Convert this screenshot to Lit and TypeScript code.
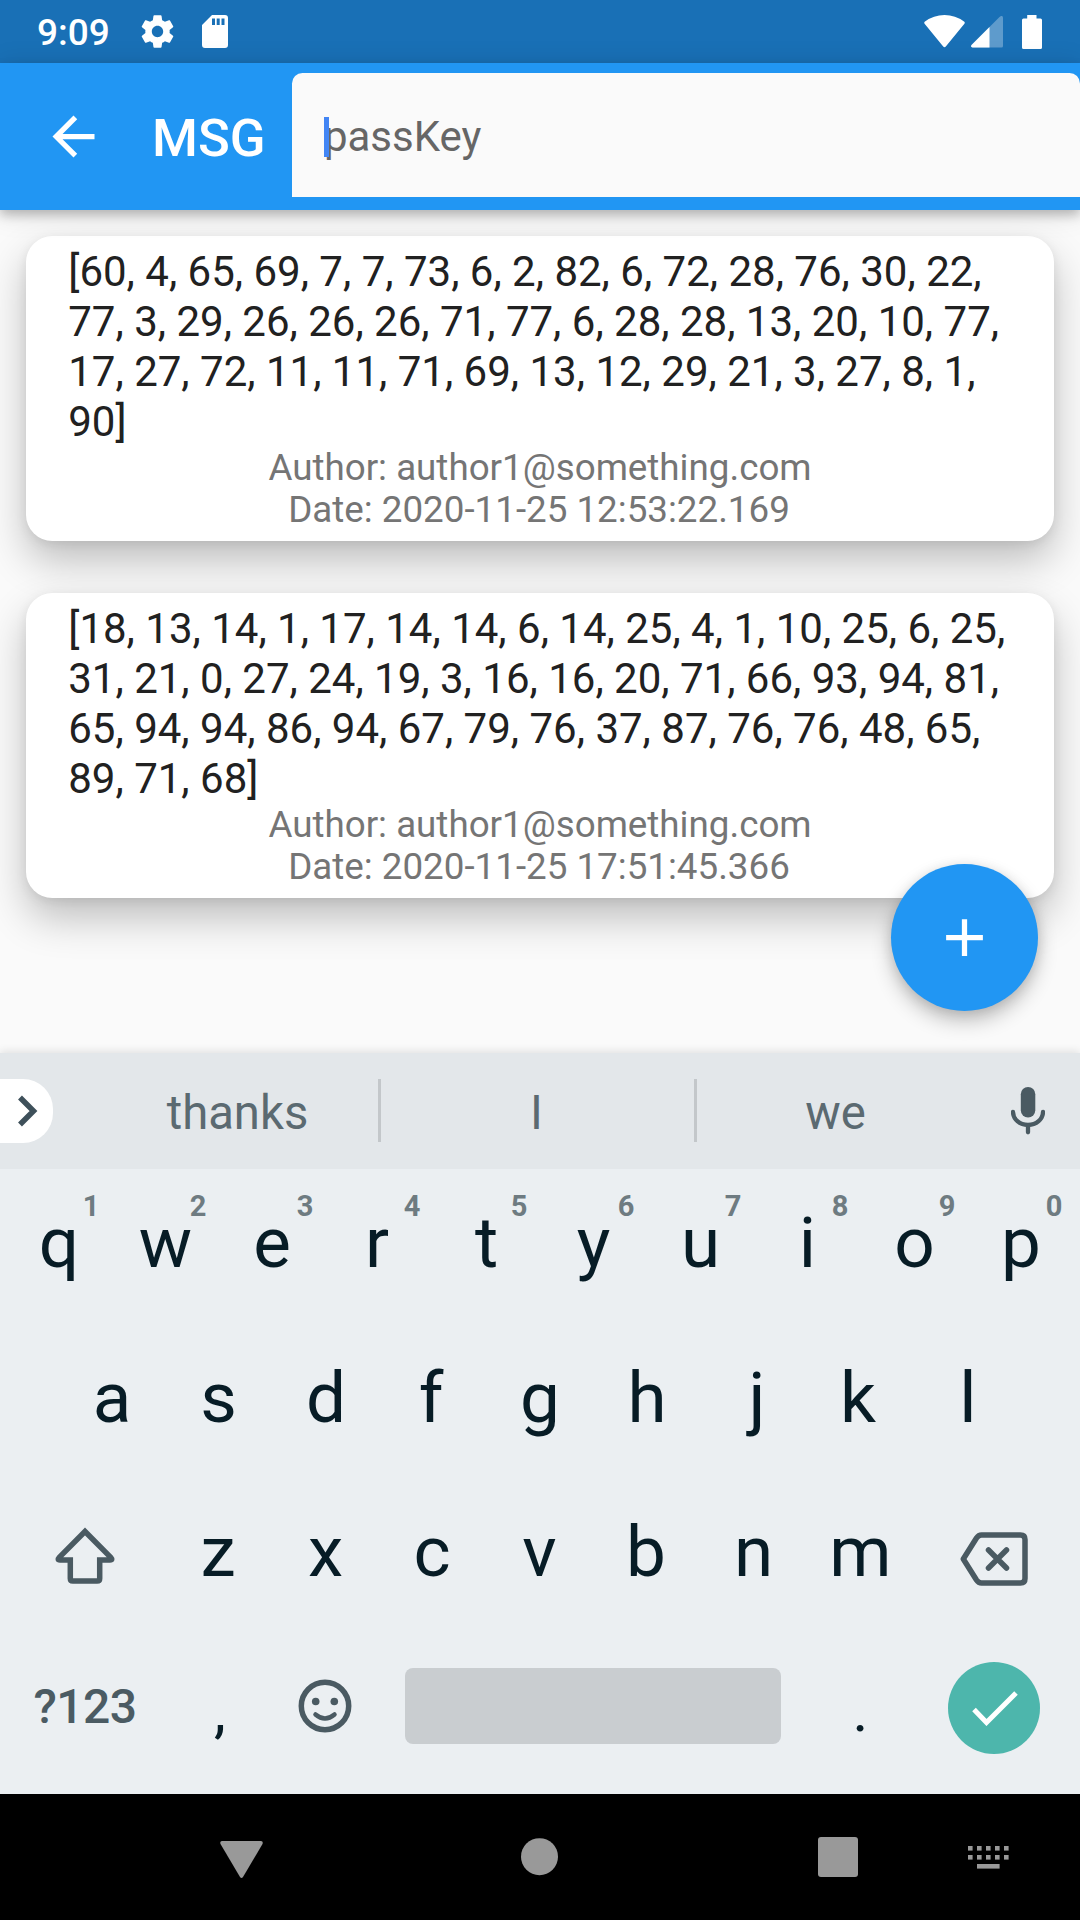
import { LitElement, html, svg, css } from "lit";
import { customElement, property } from "lit/decorators.js";

interface Message {
  cipher: string;
  author: string;
  date: string;
}

const MESSAGES: Message[] = [
  {
    cipher:
      "[60, 4, 65, 69, 7, 7, 73, 6, 2, 82, 6, 72, 28, 76, 30, 22, 77, 3, 29, 26, 26, 26, 71, 77, 6, 28, 28, 13, 20, 10, 77, 17, 27, 72, 11, 11, 71, 69, 13, 12, 29, 21, 3, 27, 8, 1, 90]",
    author: "author1@something.com",
    date: "2020-11-25 12:53:22.169",
  },
  {
    cipher:
      "[18, 13, 14, 1, 17, 14, 14, 6, 14, 25, 4, 1, 10, 25, 6, 25, 31, 21, 0, 27, 24, 19, 3, 16, 16, 20, 71, 66, 93, 94, 81, 65, 94, 94, 86, 94, 67, 79, 76, 37, 87, 76, 76, 48, 65, 89, 71, 68]",
    author: "author1@something.com",
    date: "2020-11-25 17:51:45.366",
  },
];

// Optical centring: horizontal shift in px for glyphs with uneven side bearings.
const OPTICAL: Record<string, number> = { q: 0.5, r: -2.5, p: -0.5, d: 0, f: -2, j: 3, k: -3, b: -0.5, z: -0.5, s: -0.5, c: -0.5, e: -0.5 };

@customElement("status-bar")
class StatusBar extends LitElement {
  static styles = css`
    :host {
      display: flex;
      align-items: center;
      height: 63px;
      background: #1970b6;
      color: #fff;
      padding: 0 38px 0 37px;
      box-sizing: border-box;
    }
    .time {
      font-size: 37px;
      font-weight: 500;
      line-height: 40px;
      padding-top: 3px;
      width: 101px;
      white-space: nowrap;
    }
    svg {
      display: block;
      fill: #fff;
      flex: none;
    }
    .gear {
      margin-left: -0.500px;
    }
    .sd {
      margin-left: 25.500px;
    }
    .wifi {
      margin-left: auto;
    }
    .signal {
      margin-left: 5.500px;
    }
    .battery {
      margin-left: 19.500px;
    }
  `;
  render() {
    return html`
      <span class="time">9:09</span>
      <svg class="gear" width="39" height="39" viewBox="0 0 24 24">
        <path
          d="M19.43 12.98c.04-.32.07-.64.07-.98s-.03-.66-.07-.98l2.11-1.65c.19-.15.24-.42.12-.64l-2-3.46c-.12-.22-.39-.3-.61-.22l-2.49 1c-.52-.4-1.08-.73-1.69-.98l-.38-2.65C14.46 2.18 14.25 2 14 2h-4c-.25 0-.46.18-.49.42l-.38 2.65c-.61.25-1.17.59-1.69.98l-2.49-1c-.23-.09-.49 0-.61.22l-2 3.46c-.13.22-.07.49.12.64l2.11 1.65c-.04.32-.07.65-.07.98s.03.66.07.98l-2.11 1.65c-.19.15-.24.42-.12.64l2 3.46c.12.22.39.3.61.22l2.49-1c.52.4 1.08.73 1.69.98l.38 2.65c.03.24.24.42.49.42h4c.25 0 .46-.18.49-.42l.38-2.65c.61-.25 1.17-.59 1.69-.98l2.49 1c.23.09.49 0 .61-.22l2-3.46c.12-.22.07-.49-.12-.64l-2.11-1.65zM12 15.500c-1.930 0-3.500-1.570-3.500-3.500s1.570-3.500 3.500-3.500 3.500 1.570 3.500 3.500-1.570 3.500-3.500 3.500z"
        />
      </svg>
      <svg class="sd" width="26" height="33" viewBox="0 0 26 33">
        <path
          fill-rule="evenodd"
          d="M10 0H23a3 3 0 0 1 3 3V30a3 3 0 0 1-3 3H3a3 3 0 0 1-3-3V10ZM10 3.500V10h3V3.500ZM14.700 3.500V10h3V3.500ZM19.500 3.500V10h3V3.500Z"
        />
      </svg>
      <svg class="wifi" width="41" height="33" viewBox="0 0 41 33">
        <path d="M.6 8.800Q-.3 7.500 1 6.600Q9.500 0 20.500 0T40 6.600Q41.300 7.500 40.400 8.800L21.800 31.500Q20.500 33 19.200 31.500Z" />
      </svg>
      <svg class="signal" width="32" height="32" viewBox="0 0 32 32">
        <path opacity=".3" d="M28.500 1Q32-1.500 32 2V30q0 1.500-1.500 1.500H1.500Q-.8 31 .5 29Z" />
        <path d="M18.500 11V31.500H1.500Q-.8 31 .5 29Z" />
      </svg>
      <svg class="battery" width="20" height="34" viewBox="0 0 20 34">
        <path d="M5.200 0h9.300v3.500H18.500a1.500 1.500 0 0 1 1.500 1.500V32.500a1.500 1.500 0 0 1-1.500 1.500H1.500a1.500 1.500 0 0 1-1.500-1.500V5a1.500 1.500 0 0 1 1.500-1.500H5.200Z" />
      </svg>
    `;
  }
}

@customElement("app-header")
class AppHeader extends LitElement {
  static styles = css`
    :host {
      display: flex;
      height: 147px;
      box-sizing: border-box;
      padding-left: 42px;
      background: #2196f3;
      box-shadow: 0 5px 10px rgba(0, 0, 0, 0.22), 0 3px 26px rgba(0, 0, 0, 0.13);
      position: relative;
      z-index: 1;
    }
    .back {
      display: block;
      width: 63px;
      height: 63px;
      margin: 42px 47px 0 0;
      fill: #fff;
      flex: none;
    }
    .title {
      width: 140.400px;
      line-height: 147px;
      padding-top: 1.500px;
      font-size: 52.500px;
      font-weight: 500;
      color: #fff;
      flex: none;
    }
    .field {
      display: flex;
      align-items: center;
      box-sizing: border-box;
      flex: 1;
      height: 123.500px;
      margin-top: 10.300px;
      padding: 3px 31.500px 0;
      background: #fafafa;
      border-radius: 10.500px 10.500px 0 0;
    }
    .hint {
      font-size: 42px;
      line-height: 50px;
      color: #666;
      position: relative;
    }
    .caret {
      position: absolute;
      left: 0;
      top: 5px;
      width: 5.250px;
      height: 40px;
      background: #4285f4;
    }
  `;
  render() {
    return html`
      <svg class="back" viewBox="0 0 24 24">
        <path d="M20 11H7.830l5.590-5.590L12 4l-8 8 8 8 1.410-1.410L7.830 13H20v-2z" />
      </svg>
      <span class="title">MSG</span>
      <div class="field">
        <span class="hint">passKey<i class="caret"></i></span>
      </div>
    `;
  }
}

@customElement("message-card")
class MessageCard extends LitElement {
  @property({ attribute: false }) message!: Message;
  static styles = css`
    :host {
      display: block;
      box-sizing: border-box;
      height: 304.500px;
      padding: 10.400px 42px;
      background: #fff;
      border-radius: 26.250px;
      box-shadow: 0 20px 40px rgba(0, 0, 0, 0.24), 0 3px 12px rgba(0, 0, 0, 0.08);
    }
    .cipher {
      font-size: 42px;
      line-height: 50px;
      color: #212121;
    }
    .meta {
      font-size: 36.750px;
      line-height: 42px;
      color: #757575;
      text-align: center;
    }
    .date {
      padding-right: 2px;
    }
  `;
  render() {
    return html`
      <div class="cipher">${this.message.cipher}</div>
      <div class="meta">Author: ${this.message.author}</div>
      <div class="meta date">Date: ${this.message.date}</div>
    `;
  }
}

@customElement("soft-keyboard")
class SoftKeyboard extends LitElement {
  static styles = css`
    :host {
      display: block;
      height: 741px;
      background: #ebeff2;
      box-shadow: 0 -2px 8px rgba(0, 0, 0, 0.1);
      position: relative;
      z-index: 2;
    }
    svg {
      display: block;
      flex: none;
    }
    .suggest {
      display: grid;
      grid-template-columns: 95px 283px 3px 313px 3px 279px 104px;
      align-items: center;
      height: 116px;
      background: #e3e7ea;
      color: #5b6a71;
      font-size: 47.250px;
      line-height: 56px;
      text-align: center;
    }
    .word {
      padding: 4px 0 0 2px;
    }
    .word.shifted {
      padding: 4px 2px 0 0;
    }
    .pill {
      display: flex;
      align-items: center;
      width: 52.500px;
      height: 64px;
      margin-bottom: 1px;
      padding-left: 17px;
      box-sizing: border-box;
      background: #fff;
      border-radius: 0 30px 30px 0;
    }
    .bar {
      height: 63px;
      margin-bottom: 1px;
      background: #c3c7ca;
    }
    .mic {
      margin-left: 35.400px;
    }
    .keys {
      display: grid;
      grid-auto-rows: 148px;
      row-gap: 6.500px;
      padding-top: 0.400px;
    }
    .row {
      display: grid;
      align-items: center;
      justify-items: center;
    }
    .top {
      grid-template-columns: repeat(10, 107px);
      padding-left: 5px;
    }
    .mid {
      grid-template-columns: repeat(9, 107px);
      padding-left: 58.500px;
    }
    .low {
      grid-template-columns: 160px repeat(7, 107px) 160px;
      padding-left: 5px;
    }
    .last {
      grid-template-columns: 160px 107px 107px 429px 107px 160px;
      padding-left: 4px;
    }
    .key {
      position: relative;
      width: 107px;
      text-align: center;
      font-size: 71px;
      line-height: 84px;
      color: #071c26;
    }
    .hint {
      position: absolute;
      top: -12px;
      left: 66px;
      width: 40px;
      text-indent: 0;
      font-size: 29px;
      line-height: 34px;
      font-weight: 700;
      color: #6e7b81;
    }
    .symbols {
      padding-left: 2px;
      font-size: 48px;
      line-height: 56px;
      font-weight: 500;
      letter-spacing: -0.500px;
      color: #4b5b63;
    }
    .punct {
      font-size: 60px;
      line-height: 84px;
      padding-top: 8px;
      color: #071c26;
    }
    .comma {
      padding-left: 5px;
    }
    .space {
      width: 376px;
      height: 76px;
      margin-top: -2px;
      border-radius: 8px;
      background: #c9cdd0;
    }
    .enter {
      display: grid;
      place-items: center;
      width: 92px;
      height: 92px;
      margin-top: 2px;
      border-radius: 50%;
      background: #4db6ac;
    }
    .check {
      margin-left: 2px;
      margin-top: 1px;
    }
    .shift {
      margin-top: 8px;
    }
    .back {
      margin-top: 13px;
    }
    .smile {
      margin-bottom: 2px;
      margin-left: 1px;
    }
  `;
  private key(c: string, hint?: number) {
    return html`<span class="key" style="text-indent:${2 * (OPTICAL[c] ?? 0)}px"
      >${c}${hint === undefined ? "" : html`<b class="hint">${hint}</b>`}</span
    >`;
  }
  render() {
    return html`
      <div class="suggest">
        <div class="pill">
          <svg width="21" height="32" viewBox="0 0 21 32">
            <path d="M3 2.500 16.500 16 3 29.500" fill="none" stroke="#3e505a" stroke-width="5.500" />
          </svg>
        </div>
        <span class="word">thanks</span>
        <i class="bar"></i>
        <span class="word shifted">I</span>
        <i class="bar"></i>
        <span class="word shifted">we</span>
        <svg class="mic" width="34" height="48" viewBox="0 0 34 48">
          <rect x="9.800" y="0" width="14.500" height="30.500" rx="7.250" fill="#4a5a62" />
          <path
            d="M2 25a15 13 0 0 0 30 0M17 38V45.300"
            fill="none"
            stroke="#4a5a62"
            stroke-width="4.300"
            stroke-linecap="round"
          />
        </svg>
      </div>
      <div class="keys">
        <div class="row top">${[..."qwertyuiop"].map((c, i) => this.key(c, (i + 1) % 10))}</div>
        <div class="row mid">${[..."asdfghjkl"].map((c) => this.key(c))}</div>
        <div class="row low">
          <svg class="shift" width="60" height="58" viewBox="0 0 60 58">
            <path
              d="M30 4.500 4.300 30.300Q1.800 33 5 33H15.300V51.500q0 2.500 2.500 2.500H42.200q2.500 0 2.500-2.500V33H55q3.200 0 .7-2.700Z"
              fill="none"
              stroke="#4a5a62"
              stroke-width="5.500"
            />
          </svg>
          ${[..."zxcvbnm"].map((c) => this.key(c))}
          <svg class="back" width="68" height="54" viewBox="0 0 68 54">
            <path
              d="M3.300 27 16.500 6Q18.500 3 21.500 3H60.500Q65 3 65 7.500V46.500Q65 51 60.500 51H21.500Q18.500 51 16.500 48Z"
              fill="none"
              stroke="#4a5a62"
              stroke-width="5.500"
              stroke-linejoin="round"
            />
            <path
              d="M28.500 18 46.500 36M46.500 18 28.500 36"
              fill="none"
              stroke="#4a5a62"
              stroke-width="5.500"
              stroke-linecap="round"
            />
          </svg>
        </div>
        <div class="row last">
          <span class="symbols">?123</span>
          <span class="punct comma">,</span>
          <svg class="smile" width="54" height="54" viewBox="0 0 54 54" fill="none" stroke="#4a5a62">
            <circle cx="27" cy="27" r="23.700" stroke-width="5.500" />
            <circle cx="17.700" cy="22.500" r="3.800" fill="#4a5a62" stroke="none" />
            <circle cx="36.300" cy="22.500" r="3.800" fill="#4a5a62" stroke="none" />
            <path d="M17.500 35.500Q27 43.500 36.500 35.500" stroke-width="4.500" stroke-linecap="round" />
          </svg>
          <div class="space"></div>
          <span class="punct">.</span>
          <div class="enter">
            <svg class="check" width="46" height="35" viewBox="0 0 46 35">
              <path d="M2 18.500 14.500 31.500 44 2" fill="none" stroke="#fff" stroke-width="5" />
            </svg>
          </div>
        </div>
      </div>
    `;
  }
}

@customElement("nav-bar")
class NavBar extends LitElement {
  static styles = css`
    :host {
      display: flex;
      align-items: center;
      box-sizing: border-box;
      height: 126px;
      padding-left: 219.500px;
      background: #000;
      position: relative;
      z-index: 3;
    }
    svg {
      display: block;
      fill: #999;
      flex: none;
    }
    .back {
      margin-top: 5px;
    }
    .home {
      margin-left: 258.500px;
    }
    .recent {
      margin-left: 259px;
    }
    .ime {
      margin-left: 110px;
      margin-top: 1px;
    }
  `;
  render() {
    return html`
      <svg class="back" width="43" height="38" viewBox="0 0 43 38">
        <path d="M2 0H41Q43.500.500 42.500 3L23 36Q21.500 38 20 36L.500 3Q-.500.500 2 0Z" />
      </svg>
      <svg class="home" width="38" height="38" viewBox="0 0 38 38"><circle cx="18.500" cy="18.700" r="18.500" /></svg>
      <svg class="recent" width="40" height="40" viewBox="0 0 40 40"><rect width="40" height="40" rx="3" /></svg>
      <svg class="ime" width="41" height="23" viewBox="0 0 41 23">
        ${[0, 9].map((y) =>
          [0, 9, 18, 27, 36].map((x) => svg`<rect x=${x} y=${y} width="4.600" height="4.600" />`)
        )}
        <rect x="9" y="18" width="22.600" height="4.600" />
      </svg>
    `;
  }
}

@customElement("app-root")
class AppRoot extends LitElement {
  static styles = css`
    :host {
      display: flex;
      flex-direction: column;
      width: 1080px;
      height: 1920px;
      overflow: hidden;
      position: relative;
      background: #fafafa;
      font-family: Roboto, "Liberation Sans", sans-serif;
    }
    .list {
      display: flex;
      flex-direction: column;
      gap: 52.500px;
      flex: 1;
      min-height: 0;
      padding: 26.250px 26.250px 0;
    }
    .fab {
      position: absolute;
      left: 891px;
      top: 864px;
      width: 147px;
      height: 147px;
      display: grid;
      place-items: center;
      border-radius: 50%;
      background: #2196f3;
      box-shadow: 0 10px 20px rgba(0, 0, 0, 0.24), 0 2px 12px rgba(0, 0, 0, 0.1);
    }
    .plus {
      width: 63px;
      height: 63px;
      fill: #fff;
    }
  `;
  render() {
    return html`
      <status-bar></status-bar>
      <app-header></app-header>
      <div class="list">
        ${MESSAGES.map((m) => html`<message-card .message=${m}></message-card>`)}
      </div>
      <div class="fab">
        <svg class="plus" viewBox="0 0 24 24"><path d="M19 13h-6v6h-2v-6H5v-2h6V5h2v6h6v2z" /></svg>
      </div>
      <soft-keyboard></soft-keyboard>
      <nav-bar></nav-bar>
    `;
  }
}
